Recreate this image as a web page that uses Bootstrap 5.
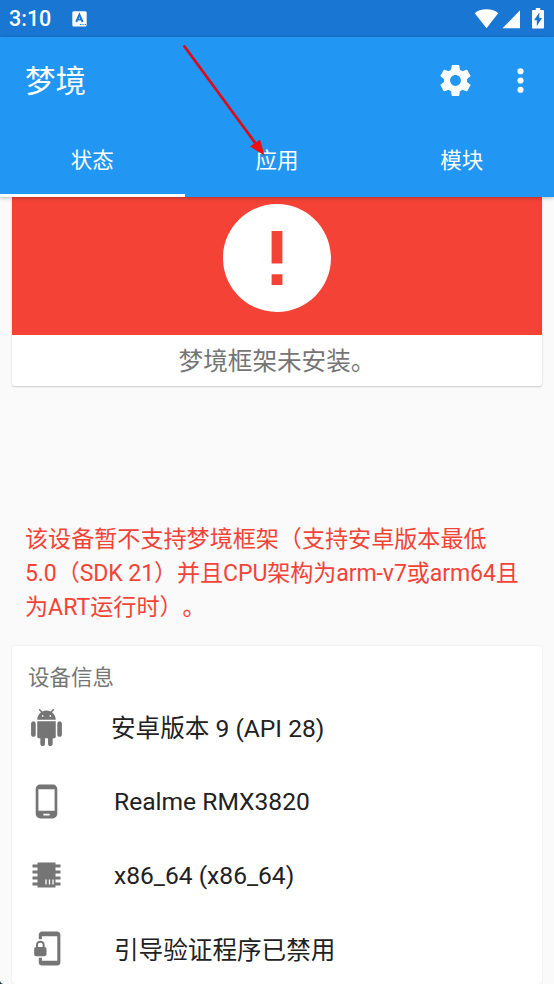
<!DOCTYPE html>
<html lang="zh-CN">
<head>
<meta charset="utf-8">
<meta name="viewport" content="width=device-width, initial-scale=1">
<title>梦境</title>
<link href="https://cdn.jsdelivr.net/npm/bootstrap@5.3.0/dist/css/bootstrap.min.css" rel="stylesheet">
<style>
body{font-family:Roboto,"Noto Sans CJK SC",sans-serif;background:#fafafa;height:984px;color:#212121}
svg{display:block;flex:none;fill:currentColor}
.status-bar{height:37px;background:#1976d2;font-size:21.5px;font-weight:500;line-height:37px;padding:0 10px 0 9px}
.keyboard-icon{margin-left:21px}
.app-bar{background:#2196f3;height:160px;box-shadow:0 1px 4px rgba(0,0,0,.25);z-index:2}
.title-row{height:86px;padding:0 15px 0 25px}
.app-title{font-size:30.5px;line-height:36px;font-weight:400;padding-top:3px}
.tab-row{height:74px;font-size:21.5px}
.tab-row a{border-bottom:3px solid transparent;color:#fff;padding-top:6px}
.tab-row a.active{border-color:#fff}
.sheet{margin:0 12px;background:#fff}
.install-sheet{border-radius:0 0 3px 3px;height:189px;box-shadow:0 1px 2px rgba(0,0,0,.2)}
.alert-band{background:#f44336;height:137.5px}
.install-text{height:52px;font-size:24.6px;color:#757575;padding-top:4px}
.warn-text{color:#f44336;font-size:23.08px;line-height:34px;margin:136.5px 25px 0;height:102px;text-spacing-trim:space-all;font-feature-settings:"chws" 0}
.warn-tight{letter-spacing:-.1px}
.warn-stop{display:inline-block}
.info-sheet{border-radius:3px;margin-top:21px;height:338px;box-shadow:0 0 2px rgba(0,0,0,.12)}
.info-head{font-size:21.5px;line-height:32px;color:#757575;padding:16px 0 0 16px;height:46px}
.info-row{height:73.8px;font-size:24.6px;padding-left:15.5px}
.info-row svg{color:#757575;margin-top:-2px}
.info-row span{margin-left:49.5px;padding-top:1px}
.info-row:nth-child(2) span{margin-left:46.5px}
.info-row:nth-child(2) span,.info-row:last-child span{padding-top:3px}
.arrow-note{left:0;top:0;z-index:5}
.corner-mark{left:0;bottom:0}
</style>
<script src="https://cdn.jsdelivr.net/npm/bootstrap@5.3.0/dist/js/bootstrap.bundle.min.js"></script>
</head>
<body class="overflow-hidden position-relative">
<div class="status-bar d-flex align-items-center text-white">
  <span>3:10</span>
  <svg class="keyboard-icon" width="15" height="16" viewBox="0 0 15 16"><rect x=".3" y=".3" width="14.4" height="15.2" rx="1.5"/><path d="M4.200 11 7.400 3.600 10.600 11M5.300 8.600h4.200" fill="none" stroke="#1976d2" stroke-width="1.9"/><path d="M8 13h1.200v1H8zm2.400 0h1.200v1h-1.200zm2.400 0H14v1h-1.200z" fill="#1976d2"/></svg>
  <svg class="ms-auto" width="70" height="22" viewBox="0 0 70 22"><path d="M12.500 20.300.8 5.300C3.200 2.900 7.500 1.300 12.500 1.300s9.300 1.600 11.700 4zM28.500 20.300 46 2.300v18zM61.800 0h4.400v2H69q1 0 1 1v16.500q0 1-1 1H59q-1 0-1-1V3q0-1 1-1h2.800z"/><path d="M65.300 4.500v5.600h2.700l-5.200 8v-5.800H60z" fill="#1976d2"/></svg>
</div>
<header class="app-bar text-white position-relative">
  <div class="title-row d-flex align-items-center">
    <h1 class="app-title mb-0 me-auto">梦境</h1>
    <svg width="37" height="37" viewBox="0 0 24 24" class="me-1"><path d="M19.430 12.980c.04-.32.070-.640.070-.980s-.030-.660-.070-.980l2.110-1.650c.190-.150.240-.420.120-.640l-2-3.460c-.120-.220-.390-.300-.610-.220l-2.490 1c-.520-.400-1.080-.730-1.690-.980l-.380-2.650C14.460 2.180 14.250 2 14 2h-4c-.250 0-.460.180-.490.420l-.380 2.650c-.610.250-1.170.590-1.690.980l-2.490-1c-.230-.090-.490 0-.610.220l-2 3.460c-.130.220-.070.490.120.640l2.110 1.650c-.040.320-.070.650-.070.980s.030.660.070.980l-2.110 1.650c-.190.150-.240.420-.120.640l2 3.460c.120.220.390.300.610.220l2.490-1c.520.400 1.080.730 1.690.980l.380 2.650c.030.240.240.420.490.420h4c.250 0 .460-.180.490-.420l.380-2.650c.610-.250 1.170-.590 1.690-.980l2.490 1c.230.090.490 0 .610-.220l2-3.460c.120-.220.070-.490-.120-.640zM12 15.500c-1.930 0-3.500-1.570-3.500-3.500s1.570-3.500 3.500-3.500 3.500 1.570 3.500 3.500-1.570 3.500-3.500 3.500z"/></svg>
    <svg width="37" height="37" viewBox="0 0 24 24" class="ms-4"><circle cx="12" cy="6" r="2"/><circle cx="12" cy="12" r="2"/><circle cx="12" cy="18" r="2"/></svg>
  </div>
  <nav class="tab-row row g-0 text-center">
    <a class="col active d-flex align-items-center justify-content-center text-decoration-none" href="#">状态</a>
    <a class="col d-flex align-items-center justify-content-center text-decoration-none" href="#">应用</a>
    <a class="col d-flex align-items-center justify-content-center text-decoration-none" href="#">模块</a>
  </nav>
</header>
<main>
  <section class="sheet install-sheet">
    <div class="alert-band d-flex justify-content-center align-items-start text-white">
      <svg width="108" height="115" viewBox="2 .7 20 21.300"><path d="M12 2C6.480 2 2 6.480 2 12s4.480 10 10 10 10-4.480 10-10S17.520 2 12 2zm1 15h-2v-2h2v2zm0-4h-2V7h2v6z"/></svg>
    </div>
    <div class="install-text d-flex align-items-center justify-content-center">梦境框架未安装。</div>
  </section>
  <p class="warn-text mb-0">该设备暂不支持梦境框架（支持安卓版本最低<br><span class="warn-tight">5.0（SDK 21）并且CPU架构为arm-v7或arm64且</span><br>为ART运行时）<span class="warn-stop">。</span></p>
  <section class="sheet info-sheet">
    <div class="info-head">设备信息</div>
    <div class="info-row d-flex align-items-center">
      <svg width="37" height="37" viewBox="0 0 24 24"><path d="M6 18c0 .550.450 1 1 1h1v3.500c0 .830.670 1.500 1.500 1.500s1.500-.670 1.500-1.500V19h2v3.500c0 .830.670 1.500 1.500 1.500s1.500-.670 1.500-1.500V19h1c.550 0 1-.450 1-1V8H6v10zM3.500 8C2.670 8 2 8.670 2 9.500v7c0 .830.670 1.500 1.500 1.500S5 17.330 5 16.500v-7C5 8.670 4.330 8 3.500 8zm17 0c-.830 0-1.500.670-1.500 1.500v7c0 .830.670 1.500 1.500 1.500s1.500-.670 1.500-1.500v-7c0-.830-.670-1.500-1.500-1.500zm-4.970-5.840 1.300-1.300c.200-.200.200-.510 0-.710s-.510-.200-.710 0l-1.480 1.480C13.850 1.230 12.950 1 12 1c-.960 0-1.860.230-2.660.630L7.850.150c-.200-.200-.510-.200-.710 0s-.200.510 0 .710l1.310 1.310C6.970 3.260 6 5.010 6 7h12c0-1.990-.970-3.750-2.470-4.840zM10 5H9V4h1v1zm5 0h-1V4h1v1z"/></svg>
      <span>安卓版本 9 (API 28)</span>
    </div>
    <div class="info-row d-flex align-items-center">
      <svg width="37" height="37" viewBox="0 0 24 24"><path d="M16 1H8C6.340 1 5 2.340 5 4v16c0 1.660 1.340 3 3 3h8c1.660 0 3-1.340 3-3V4c0-1.660-1.340-3-3-3zm-2 20h-4v-1h4v1zm3.250-3H6.750V4h10.500v14z"/></svg>
      <span>Realme RMX3820</span>
    </div>
    <div class="info-row d-flex align-items-center">
      <svg width="37" height="37" viewBox="0 0 37 37"><path d="M9.500 6.500h18v2h5v3h-5v3h5v3h-5v3h5v3h-5v3h5v3h-5v2h-18v-2h-5v-3h5v-3h-5v-3h5v-3h-5v-3h5v-3h-5v-3h5z"/><path d="M18 23.500v5m3.500-5v5m3.500-5v5" stroke="#fff" stroke-width="1.300"/></svg>
      <span>x86_64 (x86_64)</span>
    </div>
    <div class="info-row d-flex align-items-center">
      <svg width="37" height="37" viewBox="0 0 24 24"><path d="M19 1H9c-1.100 0-2 .9-2 2v3h2V4h10v16H9v-2H7v3c0 1.100.9 2 2 2h10c1.100 0 2-.9 2-2V3c0-1.100-.9-2-2-2zm-8.200 10V9.500C10.800 8.100 9.400 7 8 7S5.200 8.100 5.200 9.500V11c-.6 0-1.200.6-1.200 1.200v3.500c0 .7.6 1.300 1.200 1.300h5.500c.7 0 1.300-.6 1.300-1.200v-3.500c0-.7-.6-1.300-1.200-1.300zm-1.300 0h-3V9.500c0-.8.7-1.300 1.500-1.300s1.500.5 1.500 1.300V11z"/></svg>
      <span>引导验证程序已禁用</span>
    </div>
  </section>
</main>
<svg class="arrow-note position-absolute" width="280" height="170" viewBox="0 0 280 170"><path d="M184.500 46.500 256 144" stroke="#dc0d18" stroke-width="2.800" stroke-linecap="round"/><path d="M264.500 155.500 250 146.500 260 139.500z" fill="#f20d0d"/></svg>
<svg class="corner-mark position-absolute" width="4" height="4" viewBox="0 0 4 4"><path d="M0 0q0 4 4 4H0z" fill="#10242c"/></svg>
</body>
</html>
